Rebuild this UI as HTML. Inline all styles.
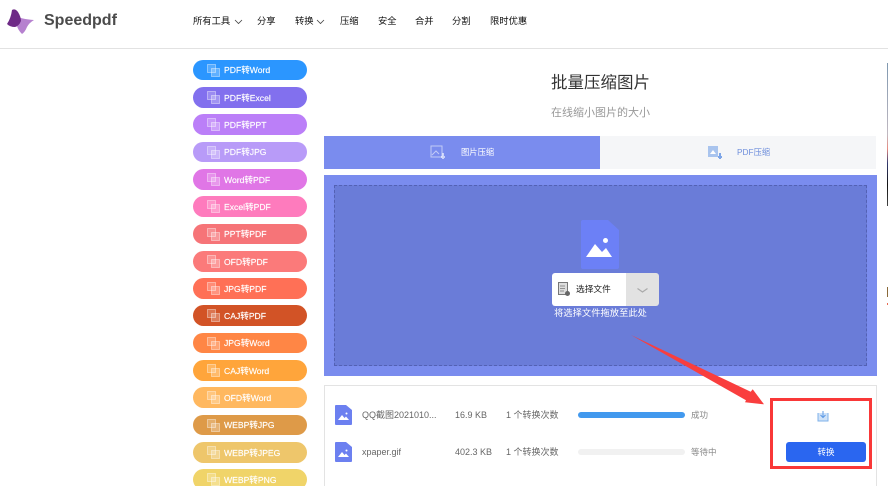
<!DOCTYPE html>
<html lang="zh">
<head>
<meta charset="utf-8">
<title>Speedpdf</title>
<style>
html,body{margin:0;padding:0;background:#fff;width:888px;height:486px;overflow:hidden}
#w{position:relative;width:888px;height:486px;overflow:hidden;font-family:"Liberation Sans","Noto Sans CJK SC",sans-serif;color:#333}
.a{position:absolute;white-space:nowrap}
.nav{top:15px;font-size:9.3px;line-height:12px;color:#111}
.pill{position:absolute;left:193px;width:114px;border-radius:11px;color:#fff;font-size:8.6px}
.pill span{position:absolute;left:31px;top:50%;transform:translateY(-50%);white-space:nowrap;-webkit-text-stroke:.15px #fff}
.pill svg{position:absolute;left:14px;top:4px}
.t{font-size:9px;line-height:12px;color:#666}
</style>
</head>
<body>
<div id="w">
<svg class="a" style="left:7px;top:9px" width="28" height="26" viewBox="0 0 28 26">
<path d="M9 7 Q14 10 27 11 Q22 14 20 18 Q18 23 15 25 Q11 21 10 17Z" fill="#b681cf"/>
<path d="M5 1 Q8 -1 11 3 Q14 8 14 12 Q12 17 8 18 Q3 18 0 15 Q4 9 5 1Z" fill="#6e2a86"/>
</svg>
<div class="a" style="left:44px;top:12px;font-size:16px;line-height:18px;font-weight:bold;color:#4b4b4b">Speedpdf</div>
<div class="a nav" style="left:193px">所有工具</div>
<svg class="a" style="left:234px;top:19px" width="9" height="6"><path d="M1 1l3.500 3.500L8 1" fill="none" stroke="#444" stroke-width=".8"/></svg>
<div class="a nav" style="left:257px">分享</div>
<div class="a nav" style="left:295px">转换</div>
<svg class="a" style="left:316px;top:19px" width="9" height="6"><path d="M1 1l3.500 3.500L8 1" fill="none" stroke="#444" stroke-width=".8"/></svg>
<div class="a nav" style="left:340px">压缩</div>
<div class="a nav" style="left:378px">安全</div>
<div class="a nav" style="left:415px">合并</div>
<div class="a nav" style="left:452px">分割</div>
<div class="a nav" style="left:490px">限时优惠</div>
<div class="a" style="left:0;top:48px;width:888px;height:1px;background:#e2e2e2"></div>

<div class="pill" style="top:60px;height:20px;background:#2b96ff"><svg width="13" height="13"><rect x=".5" y=".5" width="8" height="8" fill="#fff" fill-opacity=".2" stroke="#fff" stroke-opacity=".4"/><rect x="4.500" y="4.500" width="8" height="8" fill="#fff" fill-opacity=".25" stroke="#fff" stroke-opacity=".4"/></svg><span>PDF转Word</span></div>
<div class="pill" style="top:87px;height:21px;background:#8270ee"><svg width="13" height="13"><rect x=".5" y=".5" width="8" height="8" fill="#fff" fill-opacity=".2" stroke="#fff" stroke-opacity=".4"/><rect x="4.500" y="4.500" width="8" height="8" fill="#fff" fill-opacity=".25" stroke="#fff" stroke-opacity=".4"/></svg><span>PDF转Excel</span></div>
<div class="pill" style="top:114px;height:21px;background:#bb7ff8"><svg width="13" height="13"><rect x=".5" y=".5" width="8" height="8" fill="#fff" fill-opacity=".2" stroke="#fff" stroke-opacity=".4"/><rect x="4.500" y="4.500" width="8" height="8" fill="#fff" fill-opacity=".25" stroke="#fff" stroke-opacity=".4"/></svg><span>PDF转PPT</span></div>
<div class="pill" style="top:142px;height:20px;background:#b89bf8"><svg width="13" height="13"><rect x=".5" y=".5" width="8" height="8" fill="#fff" fill-opacity=".2" stroke="#fff" stroke-opacity=".4"/><rect x="4.500" y="4.500" width="8" height="8" fill="#fff" fill-opacity=".25" stroke="#fff" stroke-opacity=".4"/></svg><span>PDF转JPG</span></div>
<div class="pill" style="top:169px;height:21px;background:#e076e6"><svg width="13" height="13"><rect x=".5" y=".5" width="8" height="8" fill="#fff" fill-opacity=".2" stroke="#fff" stroke-opacity=".4"/><rect x="4.500" y="4.500" width="8" height="8" fill="#fff" fill-opacity=".25" stroke="#fff" stroke-opacity=".4"/></svg><span>Word转PDF</span></div>
<div class="pill" style="top:196px;height:21px;background:#fe7bbd"><svg width="13" height="13"><rect x=".5" y=".5" width="8" height="8" fill="#fff" fill-opacity=".2" stroke="#fff" stroke-opacity=".4"/><rect x="4.500" y="4.500" width="8" height="8" fill="#fff" fill-opacity=".25" stroke="#fff" stroke-opacity=".4"/></svg><span>Excel转PDF</span></div>
<div class="pill" style="top:224px;height:20px;background:#f67478"><svg width="13" height="13"><rect x=".5" y=".5" width="8" height="8" fill="#fff" fill-opacity=".2" stroke="#fff" stroke-opacity=".4"/><rect x="4.500" y="4.500" width="8" height="8" fill="#fff" fill-opacity=".25" stroke="#fff" stroke-opacity=".4"/></svg><span>PPT转PDF</span></div>
<div class="pill" style="top:251px;height:21px;background:#fb7a7a"><svg width="13" height="13"><rect x=".5" y=".5" width="8" height="8" fill="#fff" fill-opacity=".2" stroke="#fff" stroke-opacity=".4"/><rect x="4.500" y="4.500" width="8" height="8" fill="#fff" fill-opacity=".25" stroke="#fff" stroke-opacity=".4"/></svg><span>OFD转PDF</span></div>
<div class="pill" style="top:278px;height:21px;background:#ff7056"><svg width="13" height="13"><rect x=".5" y=".5" width="8" height="8" fill="#fff" fill-opacity=".2" stroke="#fff" stroke-opacity=".4"/><rect x="4.500" y="4.500" width="8" height="8" fill="#fff" fill-opacity=".25" stroke="#fff" stroke-opacity=".4"/></svg><span>JPG转PDF</span></div>
<div class="pill" style="top:305px;height:21px;background:#d25326"><svg width="13" height="13"><rect x=".5" y=".5" width="8" height="8" fill="#fff" fill-opacity=".2" stroke="#fff" stroke-opacity=".4"/><rect x="4.500" y="4.500" width="8" height="8" fill="#fff" fill-opacity=".25" stroke="#fff" stroke-opacity=".4"/></svg><span>CAJ转PDF</span></div>
<div class="pill" style="top:333px;height:20px;background:#ff8645"><svg width="13" height="13"><rect x=".5" y=".5" width="8" height="8" fill="#fff" fill-opacity=".2" stroke="#fff" stroke-opacity=".4"/><rect x="4.500" y="4.500" width="8" height="8" fill="#fff" fill-opacity=".25" stroke="#fff" stroke-opacity=".4"/></svg><span>JPG转Word</span></div>
<div class="pill" style="top:360px;height:21px;background:#ffa53b"><svg width="13" height="13"><rect x=".5" y=".5" width="8" height="8" fill="#fff" fill-opacity=".2" stroke="#fff" stroke-opacity=".4"/><rect x="4.500" y="4.500" width="8" height="8" fill="#fff" fill-opacity=".25" stroke="#fff" stroke-opacity=".4"/></svg><span>CAJ转Word</span></div>
<div class="pill" style="top:387px;height:21px;background:#ffb85f"><svg width="13" height="13"><rect x=".5" y=".5" width="8" height="8" fill="#fff" fill-opacity=".2" stroke="#fff" stroke-opacity=".4"/><rect x="4.500" y="4.500" width="8" height="8" fill="#fff" fill-opacity=".25" stroke="#fff" stroke-opacity=".4"/></svg><span>OFD转Word</span></div>
<div class="pill" style="top:415px;height:20px;background:#de9a48"><svg width="13" height="13"><rect x=".5" y=".5" width="8" height="8" fill="#fff" fill-opacity=".2" stroke="#fff" stroke-opacity=".4"/><rect x="4.500" y="4.500" width="8" height="8" fill="#fff" fill-opacity=".25" stroke="#fff" stroke-opacity=".4"/></svg><span>WEBP转JPG</span></div>
<div class="pill" style="top:442px;height:21px;background:#eec66b"><svg width="13" height="13"><rect x=".5" y=".5" width="8" height="8" fill="#fff" fill-opacity=".2" stroke="#fff" stroke-opacity=".4"/><rect x="4.500" y="4.500" width="8" height="8" fill="#fff" fill-opacity=".25" stroke="#fff" stroke-opacity=".4"/></svg><span>WEBP转JPEG</span></div>
<div class="pill" style="top:469px;height:21px;background:#f0d469"><svg width="13" height="13"><rect x=".5" y=".5" width="8" height="8" fill="#fff" fill-opacity=".2" stroke="#fff" stroke-opacity=".4"/><rect x="4.500" y="4.500" width="8" height="8" fill="#fff" fill-opacity=".25" stroke="#fff" stroke-opacity=".4"/></svg><span>WEBP转PNG</span></div>

<div class="a" style="left:551px;top:72px;font-size:16.500px;line-height:22px;color:#333">批量压缩图片</div>
<div class="a" style="left:551px;top:106px;font-size:11px;line-height:15px;color:#999">在线缩小图片的大小</div>

<div class="a" style="left:324px;top:136px;width:276px;height:33px;background:#7a8cee"></div>
<div class="a" style="left:600px;top:136px;width:276px;height:33px;background:#f5f6f8"></div>
<svg class="a" style="left:430px;top:145px" width="16" height="16"><rect x="1" y="1" width="11" height="11" fill="none" stroke="#fff" stroke-opacity=".55"/><path d="M2 10l4-4 3 3" fill="none" stroke="#fff" stroke-opacity=".55"/><path d="M13 8v6M11 12h4" stroke="#fff" stroke-opacity=".6" stroke-width="2"/></svg>
<div class="a" style="left:461px;top:147px;font-size:8.300px;line-height:11px;color:#fff">图片压缩</div>
<svg class="a" style="left:707px;top:145px" width="16" height="16"><rect x="1" y="1" width="10" height="11" fill="#a9c4ee"/><path d="M3 9l3-4 3 4z" fill="#fff"/><path d="M13 8v6M11 12h4" stroke="#7ea6e8" stroke-width="2"/></svg>
<div class="a" style="left:737px;top:147px;font-size:8.300px;line-height:11px;color:#6f8fdc">PDF压缩</div>

<div class="a" style="left:324px;top:175px;width:553px;height:201px;background:#7a8cee"></div>
<div class="a" style="left:334px;top:185px;width:531px;height:179px;background:#6a7cd8;border:1px dashed #5361b4"></div>

<svg class="a" style="left:581px;top:220px" width="38" height="49" viewBox="0 0 38 49">
<path d="M2 0H27L38 10V47a2 2 0 0 1-2 2H2a2 2 0 0 1-2-2V2a2 2 0 0 1 2-2Z" fill="#6c80f6"/>
<circle cx="24.500" cy="20.500" r="2.500" fill="#fff"/>
<path d="M5 37L14 24 21 32 25 28 31 37Z" fill="#fff"/>
</svg>

<div class="a" style="left:552px;top:273px;width:74px;height:33px;background:#fff;border-radius:3px 0 0 3px"></div>
<div class="a" style="left:626px;top:273px;width:33px;height:33px;background:#e2e2e2;border-radius:0 3px 3px 0"></div>
<svg class="a" style="left:558px;top:282px" width="13" height="15"><rect x=".5" y=".5" width="9" height="12" fill="#ddd" stroke="#777"/><path d="M2 4h5M2 6.500h5M2 9h4" stroke="#777" stroke-width=".8"/><circle cx="9.500" cy="11.500" r="2.500" fill="#666"/></svg>
<div class="a" style="left:576px;top:283px;font-size:8.700px;line-height:12px;color:#222">选择文件</div>
<svg class="a" style="left:636px;top:287px" width="13" height="7"><path d="M1.500 1.500L6.500 5l5-3.500" fill="none" stroke="#aaa" stroke-width="1.200"/></svg>
<div class="a" style="left:554px;top:307px;font-size:9.300px;line-height:13px;color:#fff">将选择文件拖放至此处</div>

<div class="a" style="left:324px;top:385px;width:551px;height:110px;border:1px solid #e3e3e3"></div>

<svg class="a" style="left:335px;top:405px" width="17" height="20"><path d="M1 0H11L17 5V19a1 1 0 0 1-1 1H1a1 1 0 0 1-1-1V1a1 1 0 0 1 1-1Z" fill="#6c80f0"/><path d="M3 15l4-5 2.500 3 1.500-1.500 3 3.500Z" fill="#fff"/><circle cx="11.500" cy="8.500" r="1" fill="#fff"/></svg>
<div class="a t" style="left:362px;top:409px">QQ截图2021010...</div>
<div class="a t" style="left:455px;top:409px">16.9 KB</div>
<div class="a t" style="left:506px;top:409px">1 个转换次数</div>
<div class="a" style="left:578px;top:412px;width:107px;height:6px;border-radius:3px;background:#4299ee"></div>
<div class="a t" style="left:691px;top:409px;font-size:8.500px;color:#888">成功</div>
<svg class="a" style="left:817px;top:410px" width="12" height="12"><path d="M1 3v8h10V3" fill="#cfe2f8" stroke="#7fb2ea"/><path d="M6 1v6M3.500 5L6 7.500 8.500 5" fill="none" stroke="#5c9ae6"/></svg>

<svg class="a" style="left:335px;top:442px" width="17" height="20"><path d="M1 0H11L17 5V19a1 1 0 0 1-1 1H1a1 1 0 0 1-1-1V1a1 1 0 0 1 1-1Z" fill="#6c80f0"/><path d="M3 15l4-5 2.500 3 1.500-1.500 3 3.500Z" fill="#fff"/><circle cx="11.500" cy="8.500" r="1" fill="#fff"/></svg>
<div class="a t" style="left:362px;top:446px">xpaper.gif</div>
<div class="a t" style="left:455px;top:446px">402.3 KB</div>
<div class="a t" style="left:506px;top:446px">1 个转换次数</div>
<div class="a" style="left:578px;top:449px;width:107px;height:6px;border-radius:3px;background:#f1f1f1"></div>
<div class="a t" style="left:691px;top:446px;font-size:8.500px;color:#888">等待中</div>
<div class="a" style="left:786px;top:442px;width:80px;height:20px;background:#2a66f0;border-radius:3px;color:#fff;font-size:8.500px;line-height:20px;text-align:center">转换</div>

<div class="a" style="left:770px;top:398px;width:96px;height:65px;border:3px solid #f93838"></div>
<svg class="a" style="left:620px;top:325px" width="160" height="90"><path d="M11 10L130.700 66.700 132.700 64.300 144 79.300 125 77.300 126 75.300Z" fill="#f93e3e"/></svg>

<div class="a" style="left:887px;top:63px;width:1px;height:143px;background:linear-gradient(#7f98b0,#c0b8c0 50%,#e88a80 60%,#333a70 70%,#111 85%,#444)"></div>
<div class="a" style="left:887px;top:287px;width:1px;height:10px;background:#8a6a3a"></div>
<div class="a" style="left:887px;top:303px;width:1px;height:2px;background:#e86a50"></div>
</div>
</body>
</html>
